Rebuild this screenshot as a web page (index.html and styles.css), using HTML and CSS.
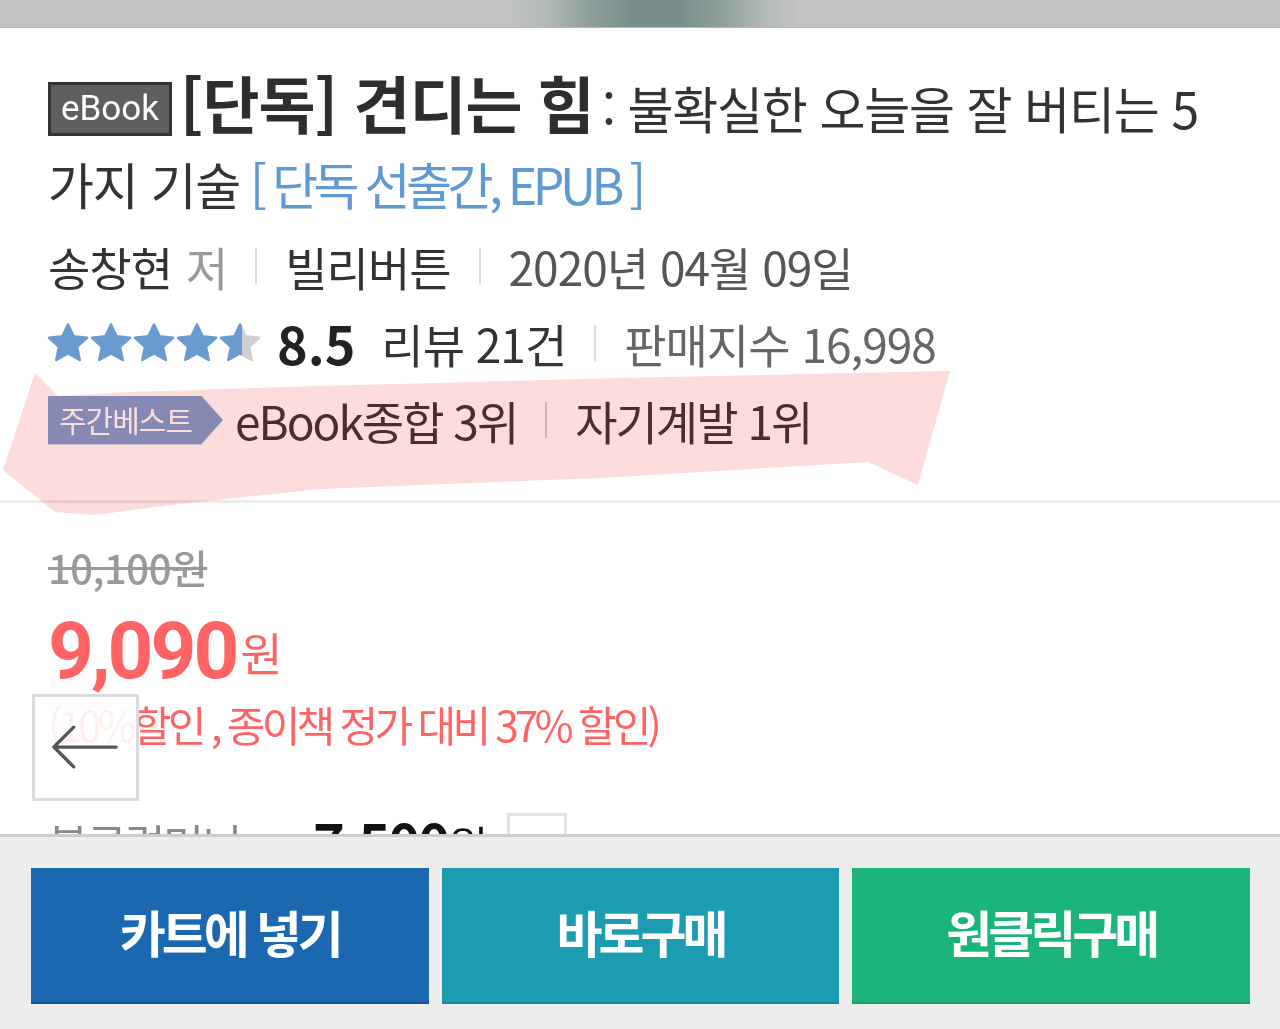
FILE: index.html
```html
<!DOCTYPE html>
<html lang="ko">
<head>
<meta charset="utf-8">
<title>견디는 힘</title>
<link rel="stylesheet" href="styles.css">
</head>
<body>
<div class="topbar"></div>
<main class="content">
  <section class="info">
    <h1 class="title"><span class="tag-ebook">eBook</span><span class="title-main">[단독] 견디는 힘</span><span class="title-sub">: 불확실한 오늘을 잘 버티는 5<br>가지 기술</span><span class="title-note">[ 단독 선출간, EPUB ]</span></h1>
    <div class="row meta">
      <span class="author">송창현</span><span class="muted">저</span>
      <span class="sep"></span>
      <span class="publisher">빌리버튼</span>
      <span class="sep"></span>
      <span class="date">2020년 04월 09일</span>
    </div>
    <div class="row rating">
      <span class="stars">
        <svg class="star" viewBox="0 0 42 40"><polygon class="star-full" points="21,1.5 26.58,13.31 40,14.82 30.04,23.94 32.76,37 21,30.5 9.24,37 11.96,23.94 2,14.82 15.42,13.31"/></svg>
        <svg class="star" viewBox="0 0 42 40"><polygon class="star-full" points="21,1.5 26.58,13.31 40,14.82 30.04,23.94 32.76,37 21,30.5 9.24,37 11.96,23.94 2,14.82 15.42,13.31"/></svg>
        <svg class="star" viewBox="0 0 42 40"><polygon class="star-full" points="21,1.5 26.58,13.31 40,14.82 30.04,23.94 32.76,37 21,30.5 9.24,37 11.96,23.94 2,14.82 15.42,13.31"/></svg>
        <svg class="star" viewBox="0 0 42 40"><polygon class="star-full" points="21,1.5 26.58,13.31 40,14.82 30.04,23.94 32.76,37 21,30.5 9.24,37 11.96,23.94 2,14.82 15.42,13.31"/></svg>
        <svg class="star" viewBox="0 0 42 40">
          <defs><linearGradient id="half"><stop offset="0.55" stop-color="#6a9bd0"/><stop offset="0.55" stop-color="#cfcfcf"/></linearGradient></defs>
          <polygon class="star-half" points="21,1.5 26.58,13.31 40,14.82 30.04,23.94 32.76,37 21,30.5 9.24,37 11.96,23.94 2,14.82 15.42,13.31"/>
        </svg>
      </span>
      <span class="score">8.5</span>
      <span class="review">리뷰 21건</span>
      <span class="sep"></span>
      <span class="sales">판매지수 16,998</span>
    </div>
    <div class="row best">
      <span class="best-badge">주간베스트</span>
      <span class="rank">eBook종합 3위</span>
      <span class="sep"></span>
      <span class="rank">자기계발 1위</span>
    </div>
  </section>
  <section class="price">
    <div class="old-price">10,100원</div>
    <div class="new-price"><span class="num">9,090</span><span class="won">원</span></div>
    <div class="discount">(10%할인 , 종이책 정가 대비 37% 할인)</div>
    <div class="bookclub"><span class="bc-label">북클럽머니</span><span class="bc-value">7,500<span class="bc-won">원</span></span><span class="bc-help">?</span></div>
  </section>
</main>

<svg class="highlight" width="1280" height="1029" viewBox="0 0 1280 1029">
  <polygon points="35,373 58,396 130,392 320,386 620,378 950,371 918,485 868,462 600,478 320,489 170,505 95,515 55,512 3,470" fill="#fddcdc"/>
</svg>

<button class="back" type="button" aria-label="뒤로">
  <svg viewBox="0 0 107 107" width="101" height="101"><path d="M86 53 H20 M41 32 L20 53 L41 74" fill="none" stroke="#555" stroke-width="3.5" stroke-linecap="round" stroke-linejoin="round"/></svg>
</button>

<footer class="actions">
  <button class="btn btn-cart" type="button">카트에 넣기</button>
  <button class="btn btn-buy" type="button">바로구매</button>
  <button class="btn btn-one" type="button">원클릭구매</button>
</footer>
</body>
</html>
```
FILE: styles.css
```css
* { box-sizing: border-box; margin: 0; padding: 0; }
html, body { background: #fff; }
body {
  width: 1280px;
  height: 1029px;
  overflow: hidden;
  position: relative;
  font-family: "Noto Sans CJK KR", "Noto Sans", sans-serif;
  color: #333;
}

.topbar {
  height: 28px;
  border-bottom: 1px solid #b4b4b4;
  background: linear-gradient(90deg, #c4c4c4 0, #c4c4c4 500px, #b3bbb9 545px, #8e9e9b 590px, #7a8f8b 630px, #7a8f8b 680px, #8e9e9b 720px, #b3bbb9 765px, #c4c4c4 800px, #c4c4c4 100%);
}

.info { padding: 0 48px; border-bottom: 3px solid #ececec; }

.title {
  margin-top: 36px;
  font-size: 50px;
  font-weight: 400;
  line-height: 76px;
  color: #333;
  letter-spacing: -1.2px;
}
.tag-ebook {
  display: inline-block;
  vertical-align: 9px;
  height: 54px;
  line-height: 48px;
  padding: 0 10px;
  margin-right: 8px;
  background: #5f5f5f;
  border: 3px solid #333;
  color: #fff;
  font-family: Roboto, "Liberation Sans", sans-serif;
  font-size: 35px;
  letter-spacing: 0;
}
.title-main {
  font-size: 62px;
  font-weight: 700;
  letter-spacing: -1px;
  color: #2e2e2e;
  margin-right: 8px;
}
.title-sub { color: #333; }
.title-note { color: #5f99d2; margin-left: 10px; letter-spacing: -4.5px; }

.row {
  display: flex;
  align-items: center;
  height: 77px;
  font-size: 46px;
  letter-spacing: -1px;
}
.meta { margin-top: 6px; }
.author, .publisher { color: #333; }
.muted { color: #9a9a9a; margin-left: 14px; }
.date { color: #555; }
.sep {
  width: 2px;
  height: 36px;
  background: #dcdcdc;
  margin: 0 28px;
}

.stars { display: flex; gap: 1px; margin-left: -1px; }
.star { width: 42px; height: 40px; display: block; }
.star-full { fill: #6a9bd0; stroke: #6a9bd0; stroke-width: 2.5; stroke-linejoin: round; }
.star-half { fill: url(#half); stroke: url(#half); stroke-width: 2.5; stroke-linejoin: round; }
.score { font-size: 52px; font-weight: 700; color: #222; margin-left: 16px; margin-right: 26px; letter-spacing: 0; }
.review { color: #333; }
.sales { color: #666; }

.best { padding-bottom: 41px; height: 119px; letter-spacing: -2px; }
.best-badge {
  height: 49px;
  width: 175px;
  padding-left: 11px;
  line-height: 47px;
  font-size: 30px;
  letter-spacing: -1px;
  color: #fff;
  background: #879fd0;
  clip-path: polygon(0 0, 153px 0, 100% 50%, 153px 100%, 0 100%);
  margin-right: 12px;
}
.rank { color: #4a3434; }
.best .sep { background: #d8d0d0; }

.price { padding: 44px 48px 0; }
.old-price {
  font-size: 40px;
  font-weight: 500;
  line-height: 40px;
  color: #999;
  text-decoration: line-through;
  text-decoration-thickness: 3px;
  letter-spacing: -0.5px;
}
.new-price {
  margin-top: 24px;
  height: 80px;
  display: flex;
  align-items: center;
  color: #ff6363;
}
.new-price .num { font-size: 80px; font-weight: 700; line-height: 80px; letter-spacing: -3px; font-family: Roboto, "Noto Sans CJK KR", sans-serif; }
.new-price .won { font-size: 46px; line-height: 60px; margin-left: 4px; }
.discount {
  margin-top: 8px;
  font-size: 42px;
  line-height: 50px;
  color: #ff6363;
  letter-spacing: -3.7px;
}
.bookclub {
  margin-top: 62px;
  display: flex;
  align-items: center;
  font-size: 44px;
  line-height: 60px;
  letter-spacing: -2px;
}
.bc-label { color: #888; width: 265px; }
.bc-value { color: #111; font-weight: 700; font-size: 54px; }
.bc-won { font-weight: 400; font-size: 44px; }
.bc-help {
  margin-left: 20px;
  width: 60px;
  height: 60px;
  border: 3px solid #e2e2e2;
  text-align: center;
  font-size: 30px;
  color: #777;
}

.highlight {
  position: absolute;
  left: 0;
  top: 0;
  pointer-events: none;
  mix-blend-mode: multiply;
}

.back {
  position: absolute;
  left: 32px;
  top: 694px;
  width: 107px;
  height: 107px;
  border: 3px solid #dcdcdc;
  background: rgba(255, 255, 255, 0.9);
  display: flex;
  align-items: center;
  justify-content: center;
}
.back svg { display: block; }

.actions {
  position: fixed;
  left: 0;
  right: 0;
  bottom: 0;
  height: 195px;
  border-top: 3px solid #cdcdcd;
  background: #ededed;
  display: flex;
  gap: 13px;
  padding: 31px 30px 0 31px;
  align-items: flex-start;
}
.btn {
  flex: 1;
  height: 136px;
  border: none;
  color: #fff;
  font-family: "Noto Sans CJK KR", "Noto Sans", sans-serif;
  font-size: 50px;
  font-weight: 700;
  letter-spacing: -4px;
  padding-bottom: 8px;
}
.btn-cart { background: #1b68b1; border-bottom: 2px solid #12539a; }
.btn-buy { background: #1b9cb1; border-bottom: 2px solid #138a9c; }
.btn-one { background: #1bb47a; border-bottom: 2px solid #139e68; }
```
